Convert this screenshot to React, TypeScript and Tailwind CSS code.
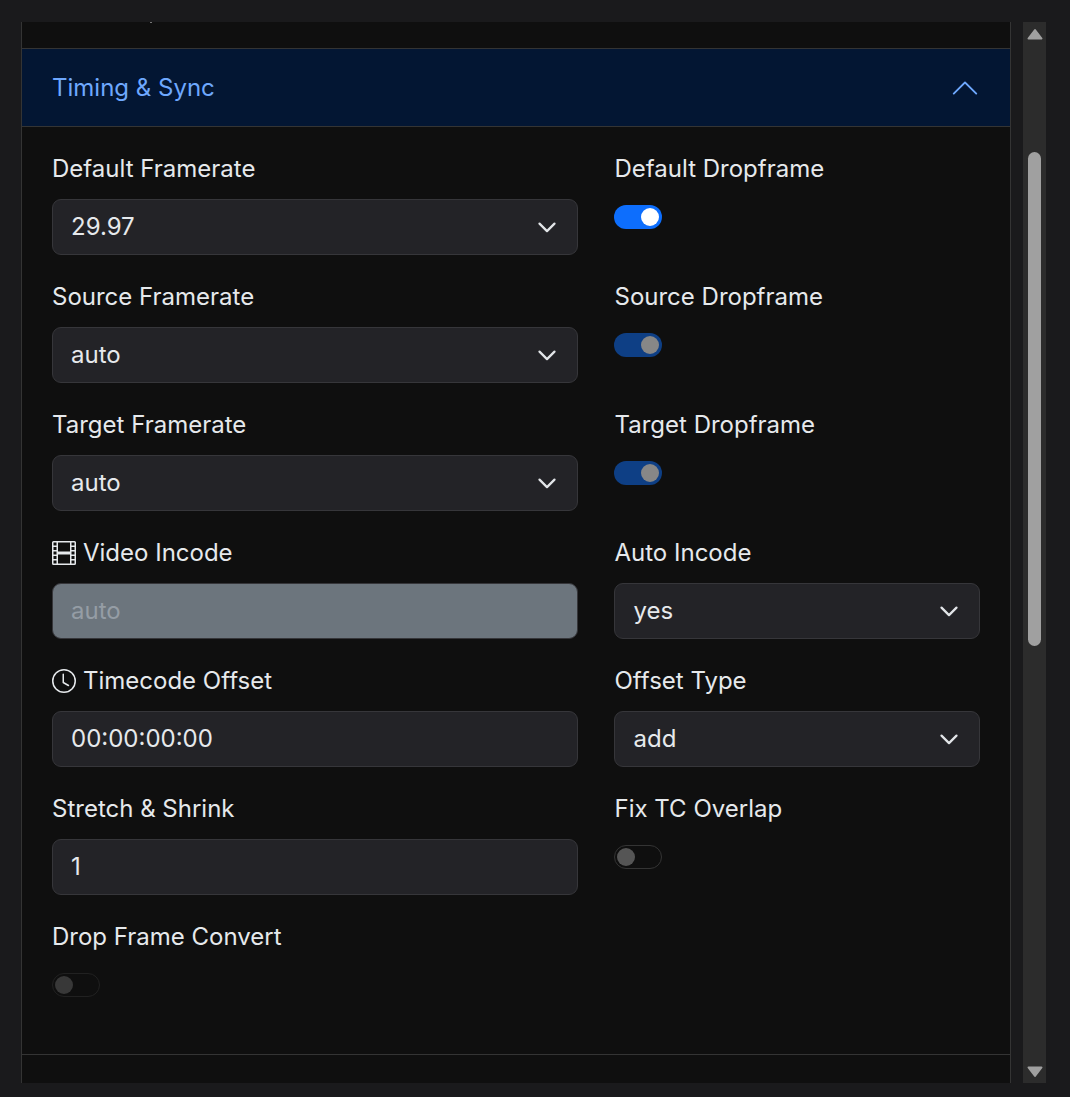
import type { ReactNode } from 'react';

function Chevron() {
  return (
    <svg viewBox="0 0 16 16" className="w-[24px] h-[24px] shrink-0" fill="none" stroke="#e2e5e8" strokeWidth="1.5" strokeLinecap="round" strokeLinejoin="round">
      <path d="M3 5.75 8 10.75l5-5" />
    </svg>
  );
}

function FilmIcon() {
  return (
    <svg viewBox="0 0 16 16" className="w-[24px] h-[24px] shrink-0" fill="currentColor">
      <path d="M0 1a1 1 0 0 1 1-1h14a1 1 0 0 1 1 1v14a1 1 0 0 1-1 1H1a1 1 0 0 1-1-1V1zm4 0v6h8V1H4zm8 8H4v6h8V9zM1 1v2h2V1H1zm2 3H1v2h2V4zM1 7v2h2V7H1zm2 3H1v2h2v-2zm-2 3v2h2v-2H1zM15 1h-2v2h2V1zm-2 3v2h2V4h-2zm2 3h-2v2h2V7zm-2 3v2h2v-2h-2zm2 3h-2v2h2v-2z" />
    </svg>
  );
}

function ClockIcon() {
  return (
    <svg viewBox="0 0 16 16" className="w-[24px] h-[24px] shrink-0" fill="currentColor">
      <path d="M8 3.5a.5.5 0 0 0-1 0V9a.5.5 0 0 0 .252.434l3.5 2a.5.5 0 0 0 .496-.868L8 8.71V3.5z" />
      <path d="M8 16A8 8 0 1 0 8 0a8 8 0 0 0 0 16zm7-8A7 7 0 1 1 1 8a7 7 0 0 1 14 0z" />
    </svg>
  );
}

function Field({ label, icon, shift, children }: { label: string; icon?: ReactNode; shift?: boolean; children: ReactNode }) {
  return (
    <div>
      <div className={shift ? 'h-[36px] mb-[12px] pl-[0.5px] flex items-center gap-[7px] text-[#e6e9ec]' : 'h-[36px] mb-[12px] flex items-center gap-[7px] text-[#e6e9ec]'}>
        {icon}
        <span>{label}</span>
      </div>
      {children}
    </div>
  );
}

function SelectBox({ value, shift }: { value: string; shift?: boolean }) {
  return (
    <div
      className={
        shift
          ? 'h-[56px] flex items-center justify-between pl-[18.5px] pr-[18px] rounded-[9px] border border-[#36363a] bg-[#232327] text-[#e6e9ec]'
          : 'h-[56px] flex items-center justify-between pl-[18px] pr-[18px] rounded-[9px] border border-[#36363a] bg-[#232327] text-[#e6e9ec]'
      }
    >
      <span>{value}</span>
      <Chevron />
    </div>
  );
}

function TextBox({ value, disabled }: { value: string; disabled?: boolean }) {
  return (
    <div
      className={
        disabled
          ? 'h-[56px] flex items-center pl-[18px] rounded-[9px] border border-[#36363a] bg-[#6c757d] text-[#959da5]'
          : 'h-[56px] flex items-center pl-[18px] rounded-[9px] border border-[#36363a] bg-[#232327] text-[#e6e9ec]'
      }
    >
      {value}
    </div>
  );
}

function Toggle({ state }: { state: 'on' | 'faded' | 'off' | 'offFaded' }) {
  if (state === 'on') {
    return (
      <div className="mt-[18px] w-[48px] h-[24px] rounded-full bg-[#0d6efd] flex items-center justify-end pr-[3px]">
        <div className="w-[18px] h-[18px] rounded-full bg-white" />
      </div>
    );
  }
  if (state === 'faded') {
    return (
      <div className="mt-[18px] w-[48px] h-[24px] rounded-full bg-[#0e3f85] flex items-center justify-end pr-[3px]">
        <div className="w-[18px] h-[18px] rounded-full bg-[#878787]" />
      </div>
    );
  }
  return (
    <div
      className={
        state === 'off'
          ? 'mt-[18px] w-[48px] h-[24px] rounded-full border border-[#343434] flex items-center pl-[2px]'
          : 'mt-[18px] w-[48px] h-[24px] rounded-full border border-[#212121] flex items-center pl-[2px]'
      }
    >
      <div className={state === 'off' ? 'w-[18px] h-[18px] rounded-full bg-[#555555]' : 'w-[18px] h-[18px] rounded-full bg-[#383838]'} />
    </div>
  );
}

export default function App() {
  return (
    <div className="w-[1070px] h-[1097px] bg-[#1a1a1c] pt-[22px] pl-[21px] flex text-[24px] leading-[36px]" style={{ fontFamily: 'Inter, "Liberation Sans", sans-serif' }}>
      <div className="w-[990px] h-[1061px] bg-[#0f0f0f] border-x border-[#343434]">
        <div className="h-[26px]">
          <div className="ml-[128px] w-[2px] h-px bg-[#777777]" />
        </div>

        <div className="h-[79px] bg-[#031633] border-y border-[#343434] flex items-center justify-between pl-[30px] pr-[30px] text-[#6ea8fe]">
          <span>Timing &amp; Sync</span>
          <svg viewBox="0 0 16 16" className="w-[30px] h-[30px] rotate-180" fill="#6ea8fe">
            <path fillRule="evenodd" d="M1.646 4.646a.5.5 0 0 1 .708 0L8 10.293l5.646-5.647a.5.5 0 0 1 .708.708l-6 6a.5.5 0 0 1-.708 0l-6-6a.5.5 0 0 1 0-.708z" />
          </svg>
        </div>

        <div className="h-[928px] border-b border-[#343434] pt-[24px] pl-[30px] pr-[30px]">
          <div className="grid grid-cols-[526px_366px] gap-x-[36px] gap-y-[24px]">
            <Field label="Default Framerate"><SelectBox value="29.97" /></Field>
            <Field label="Default Dropframe" shift><Toggle state="on" /></Field>
            <Field label="Source Framerate"><SelectBox value="auto" /></Field>
            <Field label="Source Dropframe" shift><Toggle state="faded" /></Field>
            <Field label="Target Framerate"><SelectBox value="auto" /></Field>
            <Field label="Target Dropframe" shift><Toggle state="faded" /></Field>
            <Field label="Video Incode" icon={<FilmIcon />}><TextBox value="auto" disabled /></Field>
            <Field label="Auto Incode" shift><SelectBox value="yes" shift /></Field>
            <Field label="Timecode Offset" icon={<ClockIcon />}><TextBox value="00:00:00:00" /></Field>
            <Field label="Offset Type" shift><SelectBox value="add" shift /></Field>
            <Field label="Stretch & Shrink"><TextBox value="1" /></Field>
            <Field label="Fix TC Overlap" shift><Toggle state="off" /></Field>
            <Field label="Drop Frame Convert"><Toggle state="offFaded" /></Field>
          </div>
        </div>
      </div>

      <div className="ml-[12px] w-[23px] h-[1061px] bg-[#2c2c2c] flex flex-col items-center">
        <svg viewBox="0 0 16 12" className="mt-[6px] w-[16px] h-[12px]" fill="#a0a0a0" stroke="#a0a0a0" strokeWidth="2" strokeLinejoin="round">
          <path d="M8 2 14.5 10.5 H1.5Z" />
        </svg>
        <div className="mt-[112px] w-[13px] h-[494px] rounded-full bg-[#a0a0a0]" />
        <svg viewBox="0 0 16 12" className="mt-[420px] w-[16px] h-[12px]" fill="#a0a0a0" stroke="#a0a0a0" strokeWidth="2" strokeLinejoin="round">
          <path d="M8 10 14.5 1.5 H1.5Z" />
        </svg>
      </div>
    </div>
  );
}
